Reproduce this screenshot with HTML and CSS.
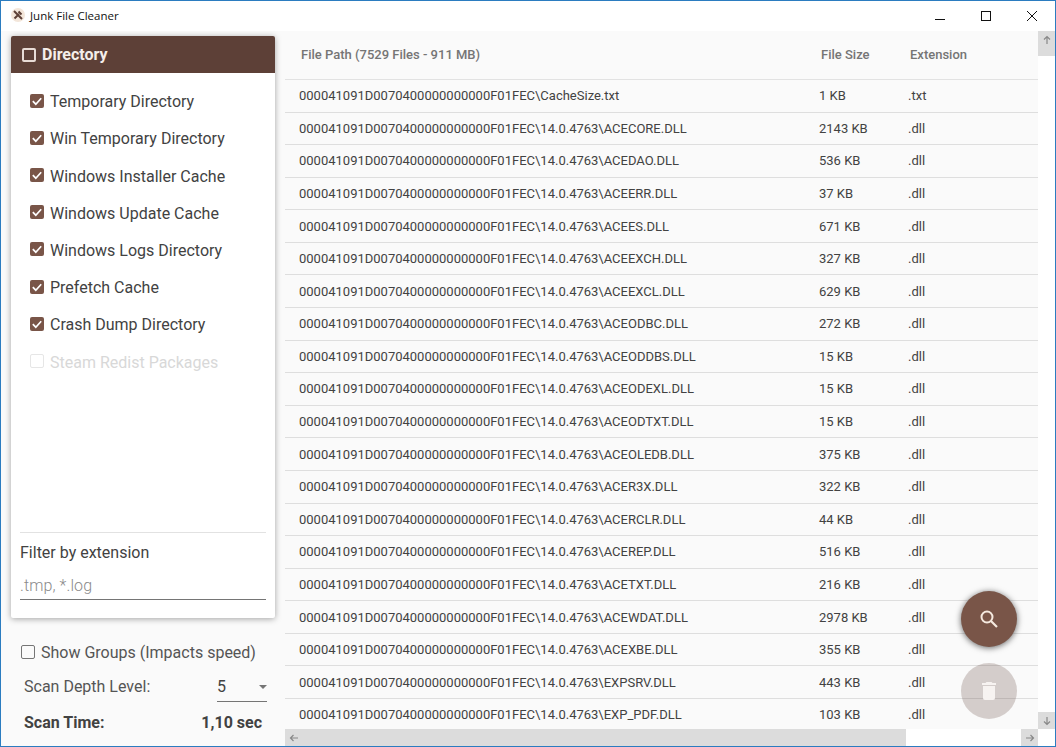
FILE: index.html
```html
<!DOCTYPE html>
<html lang="en">
<head>
<meta charset="utf-8">
<title>Junk File Cleaner</title>
<link rel="stylesheet" href="styles.css">
</head>
<body>
<div class="window">
  <header class="titlebar">
    <svg class="app-icon" width="14" height="14" viewBox="0 0 14 14"><circle cx="7" cy="7" r="7" fill="#f3e6da"/><path d="M3 3l8 8M3.5 10.5L8 6M7.5 3.5l3 3" stroke="#5d4037" stroke-width="2" fill="none"/></svg>
    <span class="app-title">Junk File Cleaner</span>
    <div class="win-controls">
      <svg width="12" height="12" viewBox="0 0 12 12"><path d="M1 9.5h10" stroke="#111" fill="none"/></svg>
      <svg width="12" height="12" viewBox="0 0 12 12"><rect x="1.5" y="1.5" width="9" height="9" stroke="#111" fill="none"/></svg>
      <svg width="12" height="12" viewBox="0 0 12 12"><path d="M1 1l10 10M11 1L1 11" stroke="#111" fill="none"/></svg>
    </div>
  </header>
  <main class="content">
    <aside class="sidebar">
      <section class="card">
        <div class="card-head">
          <span class="head-box"></span>
          <span>Directory</span>
        </div>
        <ul class="dir-list">
          <li class="dir-item"><span class="check"><svg width="14" height="14" viewBox="0 0 14 14"><path d="M2.8 7.2l3 3 5.4-6" stroke="#fff" stroke-width="1.7" fill="none"/></svg></span>Temporary Directory</li>
          <li class="dir-item"><span class="check"><svg width="14" height="14" viewBox="0 0 14 14"><path d="M2.8 7.2l3 3 5.4-6" stroke="#fff" stroke-width="1.7" fill="none"/></svg></span>Win Temporary Directory</li>
          <li class="dir-item"><span class="check"><svg width="14" height="14" viewBox="0 0 14 14"><path d="M2.8 7.2l3 3 5.4-6" stroke="#fff" stroke-width="1.7" fill="none"/></svg></span>Windows Installer Cache</li>
          <li class="dir-item"><span class="check"><svg width="14" height="14" viewBox="0 0 14 14"><path d="M2.8 7.2l3 3 5.4-6" stroke="#fff" stroke-width="1.7" fill="none"/></svg></span>Windows Update Cache</li>
          <li class="dir-item"><span class="check"><svg width="14" height="14" viewBox="0 0 14 14"><path d="M2.8 7.2l3 3 5.4-6" stroke="#fff" stroke-width="1.7" fill="none"/></svg></span>Windows Logs Directory</li>
          <li class="dir-item"><span class="check"><svg width="14" height="14" viewBox="0 0 14 14"><path d="M2.8 7.2l3 3 5.4-6" stroke="#fff" stroke-width="1.7" fill="none"/></svg></span>Prefetch Cache</li>
          <li class="dir-item"><span class="check"><svg width="14" height="14" viewBox="0 0 14 14"><path d="M2.8 7.2l3 3 5.4-6" stroke="#fff" stroke-width="1.7" fill="none"/></svg></span>Crash Dump Directory</li>
          <li class="dir-item disabled"><span class="check off"></span>Steam Redist Packages</li>
        </ul>
        <div class="filter">
          <div class="filter-label">Filter by extension</div>
          <div class="filter-input">.tmp, *.log</div>
        </div>
      </section>
      <div class="groups"><span class="box"></span>Show Groups (Impacts speed)</div>
      <div class="depth">
        <span>Scan Depth Level:</span>
        <span class="select">5<i class="caret"></i></span>
      </div>
      <div class="time"><span>Scan Time:</span><span>1,10 sec</span></div>
    </aside>
    <section class="table-area">
      <div class="table-row-wrap">
        <div class="table">
          <div class="thead"><span>File Path (7529 Files - 911 MB)</span><span>File Size</span><span>Extension</span></div>
          <div class="row"><span>000041091D0070400000000000F01FEC\CacheSize.txt</span><span>1 KB</span><span>.txt</span></div>
          <div class="row"><span>000041091D0070400000000000F01FEC\14.0.4763\ACECORE.DLL</span><span>2143 KB</span><span>.dll</span></div>
          <div class="row"><span>000041091D0070400000000000F01FEC\14.0.4763\ACEDAO.DLL</span><span>536 KB</span><span>.dll</span></div>
          <div class="row"><span>000041091D0070400000000000F01FEC\14.0.4763\ACEERR.DLL</span><span>37 KB</span><span>.dll</span></div>
          <div class="row"><span>000041091D0070400000000000F01FEC\14.0.4763\ACEES.DLL</span><span>671 KB</span><span>.dll</span></div>
          <div class="row"><span>000041091D0070400000000000F01FEC\14.0.4763\ACEEXCH.DLL</span><span>327 KB</span><span>.dll</span></div>
          <div class="row"><span>000041091D0070400000000000F01FEC\14.0.4763\ACEEXCL.DLL</span><span>629 KB</span><span>.dll</span></div>
          <div class="row"><span>000041091D0070400000000000F01FEC\14.0.4763\ACEODBC.DLL</span><span>272 KB</span><span>.dll</span></div>
          <div class="row"><span>000041091D0070400000000000F01FEC\14.0.4763\ACEODDBS.DLL</span><span>15 KB</span><span>.dll</span></div>
          <div class="row"><span>000041091D0070400000000000F01FEC\14.0.4763\ACEODEXL.DLL</span><span>15 KB</span><span>.dll</span></div>
          <div class="row"><span>000041091D0070400000000000F01FEC\14.0.4763\ACEODTXT.DLL</span><span>15 KB</span><span>.dll</span></div>
          <div class="row"><span>000041091D0070400000000000F01FEC\14.0.4763\ACEOLEDB.DLL</span><span>375 KB</span><span>.dll</span></div>
          <div class="row"><span>000041091D0070400000000000F01FEC\14.0.4763\ACER3X.DLL</span><span>322 KB</span><span>.dll</span></div>
          <div class="row"><span>000041091D0070400000000000F01FEC\14.0.4763\ACERCLR.DLL</span><span>44 KB</span><span>.dll</span></div>
          <div class="row"><span>000041091D0070400000000000F01FEC\14.0.4763\ACEREP.DLL</span><span>516 KB</span><span>.dll</span></div>
          <div class="row"><span>000041091D0070400000000000F01FEC\14.0.4763\ACETXT.DLL</span><span>216 KB</span><span>.dll</span></div>
          <div class="row"><span>000041091D0070400000000000F01FEC\14.0.4763\ACEWDAT.DLL</span><span>2978 KB</span><span>.dll</span></div>
          <div class="row"><span>000041091D0070400000000000F01FEC\14.0.4763\ACEXBE.DLL</span><span>355 KB</span><span>.dll</span></div>
          <div class="row"><span>000041091D0070400000000000F01FEC\14.0.4763\EXPSRV.DLL</span><span>443 KB</span><span>.dll</span></div>
          <div class="row"><span>000041091D0070400000000000F01FEC\14.0.4763\EXP_PDF.DLL</span><span>103 KB</span><span>.dll</span></div>
        </div>
        <div class="vscroll">
          <div class="sb-btn tall"><svg width="10" height="10" viewBox="0 0 10 10"><path d="M5 9V1.5M2 4.5l3-3 3 3" stroke="#888" stroke-width="1.2" fill="none"/></svg></div>
          <div class="sb-btn"><svg width="10" height="10" viewBox="0 0 10 10"><path d="M5 1v7.500M2 5.500l3 3 3-3" stroke="#888" stroke-width="1.2" fill="none"/></svg></div>
        </div>
      </div>
      <div class="hscroll">
        <div class="sb-btn wide"><svg width="10" height="10" viewBox="0 0 10 10"><path d="M9 5H1.500M4.500 2l-3 3 3 3" stroke="#888" stroke-width="1.200" fill="none"/></svg></div>
        <div class="h-thumb"></div>
        <div class="sb-btn wide"><svg width="10" height="10" viewBox="0 0 10 10"><path d="M1 5h7.500M5.500 2l3 3-3 3" stroke="#888" stroke-width="1.200" fill="none"/></svg></div>
        <div class="corner"></div>
      </div>
    </section>
  </main>
  <button class="fab fab-search" type="button"><svg width="24" height="24" viewBox="0 0 24 24"><circle cx="10" cy="10" r="5.500" stroke="#f5e9df" stroke-width="2" fill="none"/><path d="M14 14l6 6" stroke="#f5e9df" stroke-width="2.200" fill="none"/></svg></button>
  <button class="fab fab-trash" type="button"><svg width="24" height="24" viewBox="0 0 24 24"><path d="M6 19a2 2 0 0 0 2 2h8a2 2 0 0 0 2-2V7H6zM19 4h-3.500l-1-1h-5l-1 1H5v2h14z" fill="#f7f3f1"/></svg></button>
</div>
</body>
</html>
```
FILE: styles.css
```css
* { box-sizing: border-box; }
html, body { margin: 0; padding: 0; }
body { font-family: Roboto, "Noto Sans", sans-serif; color: #424242; background: #fafafa; }
.window {
  position: relative;
  width: 1056px;
  height: 747px;
  border: 1px solid #2b7cc0;
  display: flex;
  flex-direction: column;
  overflow: hidden;
  background: #fafafa;
}
.titlebar {
  height: 30px;
  flex: none;
  background: #fff;
  display: flex;
  align-items: center;
  padding-left: 10px;
}
.app-icon { flex: none; margin-top: -2px; }
.app-title {
  font-family: "Open Sans", "Noto Sans", sans-serif;
  font-size: 11.500px;
  color: #111;
  margin-left: 5px;
  margin-top: -2px;
}
.win-controls {
  margin-left: auto;
  display: flex;
  gap: 34px;
  padding-right: 17px;
  align-items: center;
}
.content { flex: 1; display: flex; min-height: 0; }
.sidebar { width: 284px; flex: none; padding: 5px 0 0 10px; }
.card {
  width: 264px;
  height: 582px;
  background: #fff;
  border-radius: 2px;
  box-shadow: 0 1px 6px rgba(0,0,0,.35);
  display: flex;
  flex-direction: column;
}
.card-head {
  height: 37px;
  flex: none;
  background: #5d4037;
  border-radius: 2px 2px 0 0;
  color: #f5eeea;
  font-weight: 700;
  font-size: 16px;
  display: flex;
  align-items: center;
  padding-left: 11px;
  gap: 6px;
}
.head-box {
  width: 14px;
  height: 14px;
  border: 2px solid #e8dcd6;
  border-radius: 2px;
}
.dir-list { list-style: none; margin: 0; padding: 10.150px 0 0 19px; flex: 1; }
.dir-item {
  height: 37.200px;
  display: flex;
  align-items: center;
  gap: 6px;
  font-size: 16px;
  color: #424242;
}
.dir-item.disabled { color: #d8d8d8; }
.check {
  width: 14px;
  height: 14px;
  border-radius: 2px;
  background: #795548;
  flex: none;
  margin-top: -2px;
}
.check svg { display: block; }
.check.off { background: #fff; border: 1.500px solid #e6e6e6; }
.filter {
  margin: 0 9px;
  border-top: 1px solid #e2e2e2;
  height: 86px;
  flex: none;
}
.filter-label { font-size: 16px; margin-top: 11px; line-height: 18px; }
.filter-input {
  margin-top: 14px;
  height: 24px;
  line-height: 20px;
  font-size: 16px;
  font-weight: 300;
  letter-spacing: .1px;
  color: #8a8a8a;
  border-bottom: 1px solid #757575;
  width: 246px;
}
.groups {
  display: flex;
  align-items: center;
  gap: 6px;
  margin: 26px 0 0 10px;
  font-size: 16px;
  line-height: 18px;
  height: 18px;
  color: #555;
}
.box {
  width: 14px;
  height: 14px;
  border: 1.500px solid #757575;
  border-radius: 2px;
  margin-top: -2px;
}
.depth {
  display: flex;
  justify-content: space-between;
  align-items: flex-start;
  margin: 16px 18px 0 13px;
  font-size: 16px;
  line-height: 18px;
  color: #555;
  height: 25px;
}
.select {
  position: relative;
  width: 50px;
  height: 24px;
  border-bottom: 1px solid #757575;
  color: #424242;
}
.caret {
  position: absolute;
  right: 0;
  top: 7px;
  border-left: 4px solid transparent;
  border-right: 4px solid transparent;
  border-top: 4px solid #757575;
}
.time {
  display: flex;
  justify-content: space-between;
  margin: 11px 23px 0 13px;
  font-size: 16px;
  line-height: 18px;
  font-weight: 700;
  color: #424242;
}
.table-area { flex: 1; display: flex; flex-direction: column; min-width: 0; }
.table-row-wrap { flex: 1; display: flex; min-height: 0; }
.table { flex: 1; overflow: hidden; min-width: 0; }
.thead, .row { display: grid; grid-template-columns: 520px 89px 1fr; align-items: center; }
.thead {
  height: 49px;
  padding: 0 0 2px 16px;
  font-size: 13px;
  font-weight: 500;
  color: #757575;
  border-bottom: 1px solid #e2e2e2;
}
.row {
  height: 32.590px;
  padding-left: 14px;
  font-size: 13px;
  color: #424242;
  border-bottom: 1px solid #dedede;
  white-space: nowrap;
}
.vscroll {
  width: 17px;
  flex: none;
  background: #fff;
  display: flex;
  flex-direction: column;
  justify-content: space-between;
}
.sb-btn {
  background: #dcdcdc;
  height: 17px;
  display: flex;
  align-items: center;
  justify-content: center;
  flex: none;
}
.sb-btn.tall { height: 25px; align-items: flex-start; padding-top: 4px; }
.sb-btn.wide { width: 17px; height: 17px; }
.hscroll { height: 17px; flex: none; display: flex; background: #fff; }
.h-thumb { width: 604px; background: #dcdcdc; }
.hscroll .sb-btn:nth-of-type(3) { margin-left: 115px; }
.corner { width: 17px; background: #fff; }
.fab {
  position: absolute;
  left: 960px;
  width: 56px;
  height: 56px;
  border: none;
  border-radius: 50%;
  padding: 0;
  display: flex;
  align-items: center;
  justify-content: center;
}
.fab-search {
  top: 590px;
  background: #795548;
  box-shadow: 0 1px 6px rgba(0,0,0,.6);
}
.fab-trash {
  top: 662px;
  background: rgba(93,64,55,.24);
}
```
